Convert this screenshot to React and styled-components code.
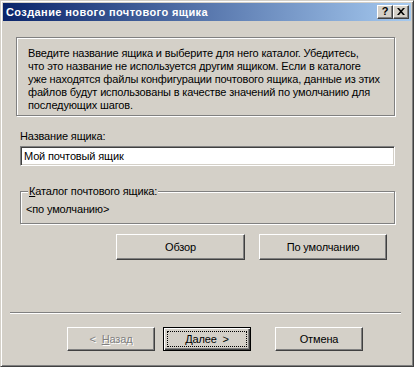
import styled, { createGlobalStyle } from "styled-components";

const GlobalStyle = createGlobalStyle`
    html, body {
        margin: 0;
        padding: 0;
        background: #d4d0c8;
    }
    * {
        box-sizing: border-box;
    }
`;

const face = "#d4d0c8";
const font = `"Liberation Sans", Arial, sans-serif`;

const Window = styled.div`
    width: 414px;
    height: 367px;
    display: flex;
    flex-direction: column;
    padding: 2px;
    background: ${face};
    border: 1px solid;
    border-color: ${face} #404040 #404040 ${face};
    box-shadow: inset 1px 1px #fff, inset -1px -1px #808080;
    font-family: ${font};
    font-size: 11px;
    letter-spacing: -0.15px;
    color: #000;
`;

const TitleBar = styled.div`
    height: 18px;
    display: flex;
    align-items: center;
    justify-content: space-between;
    padding: 0 2px 0 3px;
    background: linear-gradient(to right, #0a246a, #a6caf0);

    h1 {
        margin: 0;
        font-size: 11px;
        font-weight: 700;
        color: #fff;
        letter-spacing: 0.4px;
    }
`;

const CaptionButtons = styled.div`
    display: flex;
`;

const CaptionButton = styled.div`
    width: 16px;
    height: 14px;
    display: flex;
    align-items: center;
    justify-content: center;
    background: ${face};
    border: 1px solid;
    border-color: #fff #404040 #404040 #fff;
    box-shadow: inset -1px -1px #808080;
    font-size: 11px;
    font-weight: 700;
    line-height: 1;
    padding-bottom: 1px;
`;

const Body = styled.div`
    flex: 1;
    display: flex;
    flex-direction: column;
    padding: 16px 16px 0 13px;
`;

const InfoBox = styled.div`
    border: 1px solid #808080;
    box-shadow: inset 1px 1px #fff, 1px 1px #fff;
    padding: 9px 10px 3px 11px;
    line-height: 13px;
    white-space: nowrap;
`;

const Label = styled.div`
    margin: 14px 0 0 4px;
    line-height: 13px;
`;

const TextField = styled.div`
    margin: 3px 0 0 4px;
    height: 20px;
    display: flex;
    align-items: center;
    padding-left: 3px;
    background: #fff;
    border: 1px solid;
    border-color: #808080 #fff #fff #808080;
    box-shadow: inset 1px 1px #404040, inset -1px -1px ${face};
`;

const Group = styled.fieldset`
    margin: 19px 0 0 4px;
    padding: 5px 5px 7px 5px;
    border: 1px solid #808080;
    box-shadow: inset 1px 1px #fff, 1px 1px #fff;
    line-height: 13px;

    legend {
        padding: 0 1px;
        margin-left: 2px;
        background: ${face};
    }
`;

const ButtonRow = styled.div`
    display: flex;
    justify-content: flex-end;
    gap: 14px;
    margin-top: 10px;
    padding-right: 8px;
`;

const Button = styled.div`
    width: ${(p) => p.$w}px;
    height: ${(p) => p.$h}px;
    display: flex;
    align-items: center;
    justify-content: center;
    background: ${face};
    border: 1px solid;
    border-color: ${(p) => (p.$default ? "#000" : "#fff #404040 #404040 #fff")};
    box-shadow: ${(p) =>
        p.$default
            ? "inset 1px 1px #fff, inset -1px -1px #404040, inset -2px -2px #808080"
            : `inset -1px -1px #808080, inset 1px 1px ${face}`};
    color: ${(p) => (p.$disabled ? "#808080" : "#000")};
    text-shadow: ${(p) => (p.$disabled ? "1px 1px #fff" : "none")};
    padding: ${(p) => (p.$default ? "3px" : "0")};
`;

const Focus = styled.span`
    flex: 1;
    align-self: stretch;
    display: flex;
    align-items: center;
    justify-content: center;
    border: 1px dotted #000;
`;

const Footer = styled.div`
    display: flex;
    flex-direction: column;
    padding: 0 10px 13px 7px;
`;

const Separator = styled.div`
    height: 2px;
    border-top: 1px solid #808080;
    border-bottom: 1px solid #fff;
`;

const WizardButtons = styled.div`
    display: flex;
    justify-content: flex-end;
    gap: 8px;
    margin-top: 13px;
    padding-right: 38px;

    & > :last-child {
        margin-left: 16px;
    }
`;

function App() {
    return (
        <>
            <GlobalStyle />
            <Window>
                <TitleBar>
                    <h1>Создание нового почтового ящика</h1>
                    <CaptionButtons>
                        <CaptionButton>?</CaptionButton>
                        <CaptionButton>
                            <svg width="8" height="7" viewBox="0 0 8 7">
                                <path d="M0 0h2l2 2.2L6 0h2L5 3.5 8 7H6L4 4.8 2 7H0l3-3.5z" fill="#000" />
                            </svg>
                        </CaptionButton>
                    </CaptionButtons>
                </TitleBar>
                <Body>
                    <InfoBox>
                        Введите название ящика и выберите для него каталог. Убедитесь,
                        <br />
                        что это название не используется другим ящиком. Если в каталоге
                        <br />
                        уже находятся файлы конфигурации почтового ящика, данные из этих
                        <br />
                        файлов будут использованы в качестве значений по умолчанию для
                        <br />
                        последующих шагов.
                    </InfoBox>
                    <Label>Название ящика:</Label>
                    <TextField>Мой почтовый ящик</TextField>
                    <Group>
                        <legend>
                            <u>К</u>аталог почтового ящика:
                        </legend>
                        &lt;по умолчанию&gt;
                    </Group>
                    <ButtonRow>
                        <Button $w={129} $h={26}>Обзор</Button>
                        <Button $w={128} $h={26}>По умолчанию</Button>
                    </ButtonRow>
                </Body>
                <Footer>
                    <Separator />
                    <WizardButtons>
                        <Button $w={88} $h={24} $disabled>
                            &lt;&nbsp;&nbsp;<u>Н</u>азад
                        </Button>
                        <Button $w={88} $h={24} $default>
                            <Focus>
                                <u>Д</u>алее&nbsp;&nbsp;&gt;
                            </Focus>
                        </Button>
                        <Button $w={88} $h={24}>Отмена</Button>
                    </WizardButtons>
                </Footer>
            </Window>
        </>
    );
}

export default App;
